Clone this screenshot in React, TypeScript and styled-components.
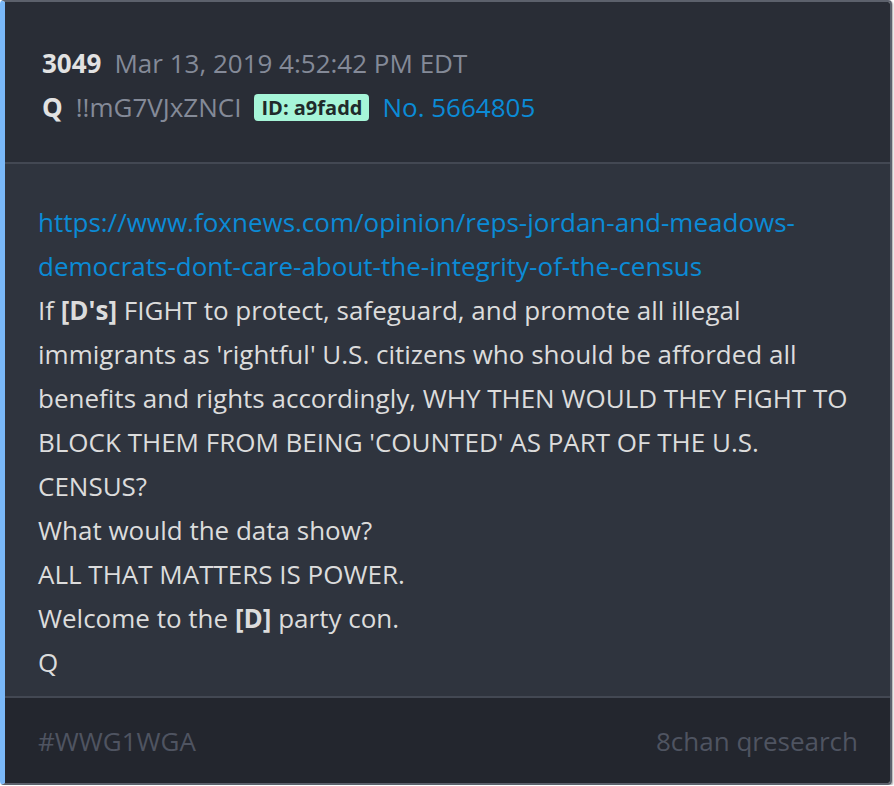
import React from "react";
import styled, { createGlobalStyle } from "styled-components";

const Global = createGlobalStyle`
  html, body { margin: 0; padding: 0; background: #ffffff; }
  body { font-family: "Open Sans", "Noto Sans", sans-serif; }
`;

const Card = styled.div`
  box-sizing: border-box;
  width: 892px;
  height: 785px;
  display: flex;
  flex-direction: column;
  border-top: 2px solid #5c616c;
  border-right: 2px solid #5c616c;
  border-bottom: 2px solid #5c616c;
  border-left: 5px solid #7ab8f8;
  border-radius: 4px;
  overflow: hidden;
  box-shadow: 1px 1px 2px rgba(0, 0, 0, 0.35);
`;

const Header = styled.header`
  background: #292d36;
  padding: 39px 24px 33px 37px;
  border-bottom: 2px solid #434853;
`;

const Line = styled.div`
  display: flex;
  align-items: center;
  gap: 13px;
  height: 44px;
  font-size: 26px;
`;

const Num = styled.span`
  font-weight: 700;
  color: #e2e2e2;
`;

const Muted = styled.span`
  color: #848a98;
`;

const Badge = styled.span`
  background: #a6f5d8;
  color: #1f2a2a;
  font-weight: 700;
  font-size: 20px;
  line-height: 27px;
  padding: 0 7px;
  border-radius: 4px;
`;

const Link = styled.a`
  color: #0b8bd6;
  text-decoration: none;
`;

const Body = styled.main`
  flex: 1;
  background: #2f343e;
  padding: 36px 30px 0 33px;
  border-bottom: 2px solid #434853;
  color: #dcdcdc;
  font-size: 26px;
  line-height: 44px;
`;

const P = styled.div``;

const Footer = styled.footer`
  background: #23262e;
  height: 85px;
  display: flex;
  align-items: center;
  justify-content: space-between;
  padding: 0 32px 0 33px;
  font-size: 26px;
  color: #4f5461;
`;

export default function App() {
  return (
    <>
      <Global />
      <Card>
        <Header>
          <Line>
            <Num>3049</Num>
            <Muted>Mar 13, 2019 4:52:42 PM EDT</Muted>
          </Line>
          <Line>
            <Num>Q</Num>
            <Muted>!!mG7VJxZNCI</Muted>
            <Badge>ID: a9fadd</Badge>
            <Link>No. 5664805</Link>
          </Line>
        </Header>
        <Body>
          <P>
            <Link>
              https://www.foxnews.com/opinion/reps-jordan-and-meadows-
              <br />
              democrats-dont-care-about-the-integrity-of-the-census
            </Link>
          </P>
          <P>
            If <b>[D's]</b> FIGHT to protect, safeguard, and promote all illegal immigrants as 'rightful' U.S. citizens who should be afforded all benefits and rights accordingly, WHY THEN WOULD THEY FIGHT TO BLOCK THEM FROM BEING 'COUNTED' AS PART OF THE U.S. CENSUS?
          </P>
          <P>What would the data show?</P>
          <P>ALL THAT MATTERS IS POWER.</P>
          <P>
            Welcome to the <b>[D]</b> party con.
          </P>
          <P>Q</P>
        </Body>
        <Footer>
          <span>#WWG1WGA</span>
          <span>8chan qresearch</span>
        </Footer>
      </Card>
    </>
  );
}
